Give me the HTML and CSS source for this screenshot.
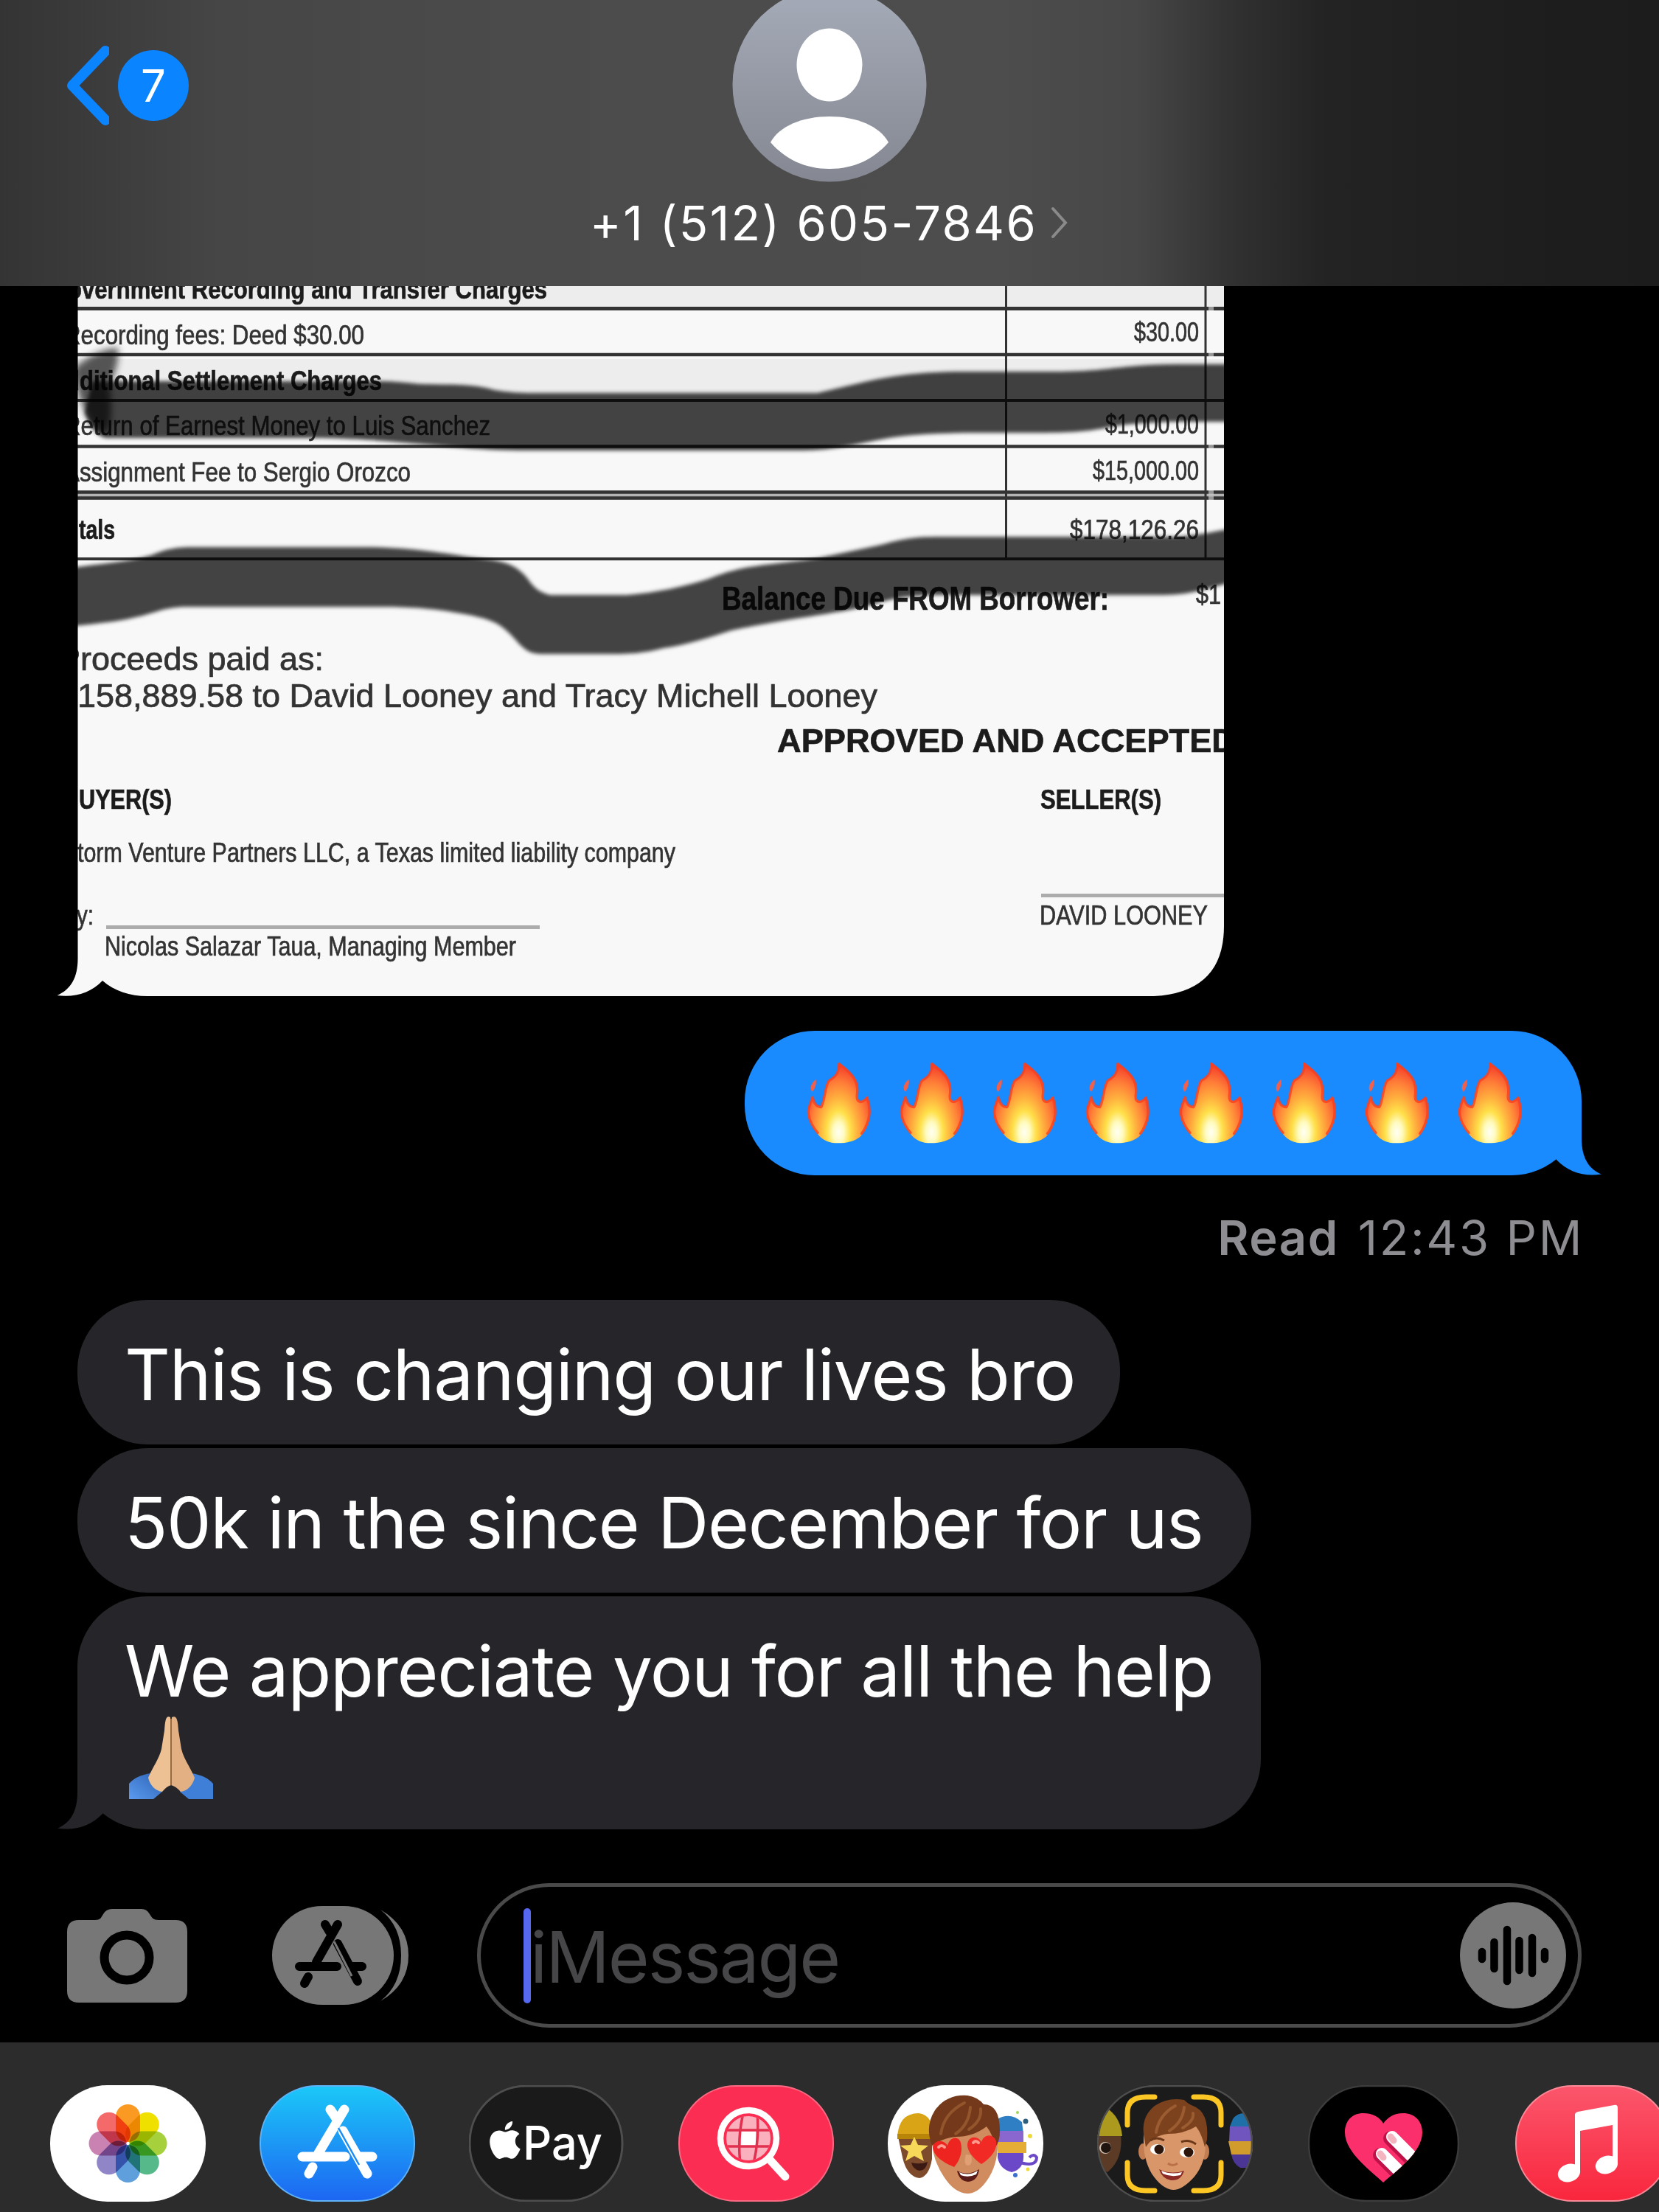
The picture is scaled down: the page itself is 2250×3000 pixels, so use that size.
FILE: index.html
```
<!DOCTYPE html>
<html lang="en">
<head>
  <meta charset="UTF-8">
  <meta name="viewport" content="width=device-width, initial-scale=1.0">
  <title>Messages</title>
  <link rel="stylesheet" href="styles.css">
</head>
<body>
<svg class="defs" width="0" height="0">
  <defs>
    <radialGradient id="fire-fill" gradientUnits="userSpaceOnUse" cx="230" cy="320" r="270" gradientTransform="translate(104 0) scale(0.55 1)">
      <stop offset="0" stop-color="#fffff4"/>
      <stop offset="0.15" stop-color="#fffbc0"/>
      <stop offset="0.32" stop-color="#ffe04a"/>
      <stop offset="0.52" stop-color="#ffb03e"/>
      <stop offset="0.74" stop-color="#ff8038"/>
      <stop offset="1" stop-color="#f4402c"/>
    </radialGradient>
    <symbol id="fire" viewBox="95 30 275 340">
      <path fill="url(#fire-fill)" d="M230 36 C285 78 318 110 309 170 C307 185 312 193 320 193 C334 191 340 184 348 174 C364 220 362 265 344 300 C336 318 326 328 318 338 C295 356 265 364 228 364 C190 364 168 352 150 332 C130 308 104 270 104 235 C106 215 118 198 125 174 C130 200 142 216 158 216 C174 190 172 135 190 108 C212 100 232 82 228 58 Z"/>
      <path fill="none" stroke="#f8401f" stroke-width="10" stroke-opacity="0.8" stroke-linejoin="round" stroke-linecap="round" d="M146 322 C126 300 108 266 108 235 C110 215 118 198 125 178 C130 202 142 218 160 218 C176 190 174 135 192 110 C212 100 234 82 232 42 C283 80 314 110 305 170 C303 188 310 197 320 197 C334 195 340 188 346 180 C360 220 358 262 340 298 C336 308 330 318 324 325"/>
      <path fill="#f0604c" d="M138 106 C142 122 136 142 124 156 C112 144 118 122 138 106Z"/>
    </symbol>
    <symbol id="tail" viewBox="0 0 80 100">
      <path d="M28 0 V50 C28 76 18 92 1 98.500 C24 102 46 96 62 79 L80 40 Z"/>
    </symbol>
  </defs>
</svg>

<div class="phone">
  <header class="header">
    <div class="back">
      <svg width="64" height="114" viewBox="0 0 64 114"><path d="M59 10 L14 57 L59 104" fill="none" stroke="#0a84ff" stroke-width="14" stroke-linecap="round" stroke-linejoin="round"/></svg>
      <span class="badge">7</span>
    </div>
    <div class="contact">
      <svg class="avatar" width="264" height="264" viewBox="0 0 264 264">
        <defs><linearGradient id="av" x1="0" y1="0" x2="0" y2="1"><stop offset="0" stop-color="#a5abb8"/><stop offset="1" stop-color="#858892"/></linearGradient></defs>
        <circle cx="132" cy="132" r="131.500" fill="url(#av)"/>
        <ellipse cx="132" cy="105" rx="44.500" ry="49.500" fill="#fff"/>
        <path d="M52 210 C64 188 95 175 132 175 C169 175 200 188 212 210 C192 233 165 246 132 246 C99 246 72 233 52 210Z" fill="#fff"/>
      </svg>
      <div class="number">
        <span class="number-text">+1 (512) 605-7846</span>
        <svg width="26" height="44" viewBox="0 0 26 44"><path d="M4 3 L21 22 L4 41" fill="none" stroke="#8a8a8a" stroke-width="4" stroke-linecap="round"/></svg>
      </div>
    </div>
  </header>

  <main class="thread">
    <svg class="attachment" width="1584" height="963" viewBox="77 388 1584 963">
      <defs>
        <clipPath id="bubble-clip"><path d="M105.500 388 V1300 C105.500 1326 96 1342 77.500 1350 C101 1353 123 1347 139 1330 C155 1344 176 1351 200 1351 H1565 Q1660 1346 1660 1256 V388 Z"/></clipPath>
        <filter id="soft" x="-5%" y="-20%" width="110%" height="140%"><feGaussianBlur stdDeviation="2.500"/></filter>
        <filter id="softer" x="-40%" y="-40%" width="180%" height="180%"><feGaussianBlur stdDeviation="5"/></filter>
      </defs>
      <g clip-path="url(#bubble-clip)">
        <rect x="77" y="388" width="1584" height="963" fill="#f8f8f8"/>
        <rect x="105" y="388" width="1556" height="31" fill="#ededed"/>
        <rect x="105" y="487" width="1556" height="56" fill="#ededed"/>

        <g class="rules">
          <path d="M105 418.500H1661" stroke-width="5"/>
          <path d="M105 481H1661" stroke-width="4.500"/>
          <path d="M105 543H1661" stroke-width="4"/>
          <path d="M105 605.500H1661" stroke-width="4.500"/>
          <path d="M105 671.500H1661" stroke-width="12" stroke="#b4b4b4"/>
          <path d="M105 667.500H1661" stroke-width="4.500"/>
          <path d="M105 675.500H1661" stroke-width="4.500"/>
          <path d="M105 758H1661" stroke-width="4"/>
          <path d="M1364.500 388V758M1635 388V758" stroke-width="3"/>
        </g>
        <path class="fade" d="M1639 418.500H1646M1639 481H1646M1639 605.500H1646M1639 667.500H1646M1639 675.500H1646"/>
        <path d="M144 1257.500H732M1412 1214.500H1661" stroke="#acacac" stroke-width="5"/>

        <g class="doc bold">
          <text x="92" y="405" textLength="650" lengthAdjust="spacingAndGlyphs">overnment Recording and Transfer Charges</text>
          <text x="89" y="529" textLength="429" lengthAdjust="spacingAndGlyphs">dditional Settlement Charges</text>
          <text x="107" y="731" textLength="49" lengthAdjust="spacingAndGlyphs">tals</text>
          <text x="107" y="1097" textLength="126" lengthAdjust="spacingAndGlyphs">UYER(S)</text>
          <text x="1411" y="1097" textLength="164" lengthAdjust="spacingAndGlyphs">SELLER(S)</text>
          <text class="large" x="979" y="827" textLength="525" lengthAdjust="spacingAndGlyphs">Balance Due FROM Borrower:</text>
          <text class="large" x="1054" y="1020" textLength="622" lengthAdjust="spacingAndGlyphs">APPROVED AND ACCEPTED</text>
        </g>
        <g class="doc">
          <text x="87" y="467" textLength="407" lengthAdjust="spacingAndGlyphs">Recording fees: Deed $30.00</text>
          <text x="87" y="590" textLength="578" lengthAdjust="spacingAndGlyphs">Return of Earnest Money to Luis Sanchez</text>
          <text x="87" y="653" textLength="470" lengthAdjust="spacingAndGlyphs">Assignment Fee to Sergio Orozco</text>
          <text x="1538" y="463" textLength="88" lengthAdjust="spacingAndGlyphs">$30.00</text>
          <text x="1499" y="588" textLength="127" lengthAdjust="spacingAndGlyphs">$1,000.00</text>
          <text x="1482" y="651" textLength="144" lengthAdjust="spacingAndGlyphs">$15,000.00</text>
          <text x="1451" y="731" textLength="175" lengthAdjust="spacingAndGlyphs">$178,126.26</text>
          <text x="1622" y="819" textLength="34" lengthAdjust="spacingAndGlyphs">$1</text>
          <text x="105" y="1169" textLength="811" lengthAdjust="spacingAndGlyphs">torm Venture Partners LLC, a Texas limited liability company</text>
          <text x="104" y="1254" textLength="23" lengthAdjust="spacingAndGlyphs">y:</text>
          <text x="142" y="1296" textLength="558" lengthAdjust="spacingAndGlyphs">Nicolas Salazar Taua, Managing Member</text>
          <text x="1410" y="1254" textLength="228" lengthAdjust="spacingAndGlyphs">DAVID LOONEY</text>
          <text class="large" x="79" y="909" textLength="360" lengthAdjust="spacingAndGlyphs">Proceeds paid as:</text>
          <text class="large" x="105" y="959" textLength="1085" lengthAdjust="spacingAndGlyphs">158,889.58 to David Looney and Tracy Michell Looney</text>
        </g>

        <!-- marker strokes -->
        <g class="marker" filter="url(#soft)">
          <path d="M125 517 L215 517 H515 C545 517 560 521 580 521 C610 522 640 520 671 529 C690 532 705 533 724 533 H1109 C1130 528 1150 523 1186 515 C1230 506 1270 504 1308 504 H1430 C1480 504 1500 500 1533 497 Q1560 494 1600 494 H1680 V572 H1590 C1540 574 1520 576 1502 580 C1470 586 1450 587 1400 587 H1310 C1260 588 1230 590 1200 595 C1160 602 1130 611 1090 611 H730 C660 612 620 606 542 600 C500 596 470 595 435 594 H145 C130 592 122 575 115 560 Z"/>
          <path d="M90 771 C130 765 170 763 205 753 C226 744 240 742 262 742 H505 C560 743 600 750 649 757 C685 761 700 766 715 784 C726 800 733 803 746 807 H850 C890 804 930 795 961 785 C980 778 995 772 1030 767 C1070 762 1090 760 1109 757 L1190 740 C1225 731 1235 728 1275 728 H1590 C1620 727 1640 722 1680 715 V787 C1630 800 1615 807 1570 807 H1290 C1230 806 1205 813 1180 821 C1150 830 1060 840 992 855 C960 865 930 875 900 879 C875 886 850 887 830 887 H735 C705 887 705 866 676 847 C660 838 640 834 600 828 C560 823 540 823 500 823 H250 C220 824 210 832 180 838 C160 843 130 846 90 850 Z"/>
        </g>
        <path class="blot" filter="url(#softer)" d="M100 500 C118 484 140 472 160 472 C162 494 154 508 148 524 C154 556 150 588 142 588 C120 580 108 550 100 500Z"/>
      </g>
    </svg>

    <div class="bubble sent">
      <svg class="fire"><use href="#fire"/></svg>
      <svg class="fire"><use href="#fire"/></svg>
      <svg class="fire"><use href="#fire"/></svg>
      <svg class="fire"><use href="#fire"/></svg>
      <svg class="fire"><use href="#fire"/></svg>
      <svg class="fire"><use href="#fire"/></svg>
      <svg class="fire"><use href="#fire"/></svg>
      <svg class="fire"><use href="#fire"/></svg>
      <svg class="tail tail-right"><use href="#tail" width="80" height="100"/></svg>
    </div>
    <div class="receipt"><b>Read</b><span>12:43 PM</span></div>

    <div class="bubble received first"><span>This is changing our lives bro</span></div>
    <div class="bubble received second"><span>50k in the since December for us</span></div>
    <div class="bubble received third">
      <span>We appreciate you for all the help</span>
      <svg class="pray" width="116" height="114" viewBox="0 0 116 114">
        <defs><linearGradient id="cuff" x1="0" y1="1" x2="1" y2="0"><stop offset="0" stop-color="#5b9bf0"/><stop offset="1" stop-color="#2c62b4"/></linearGradient></defs>
        <path d="M1 92 C8 84 18 80 30 78 L46 103 L34 113 H1Z" fill="url(#cuff)"/>
        <path d="M115 92 C108 84 98 80 86 78 L70 103 L82 113 H115Z" fill="#3f7fd8"/>
        <path d="M57 2 C51 -1 50 6 49 20 L45 45 C42 58 34 68 27 84 C30 96 38 102 46 103 C50 98 54 95 58 94Z" fill="#eec194"/>
        <path d="M59 2 C66 -1 67 6 68 20 L72 45 C75 58 83 68 90 84 C87 96 79 102 71 103 C67 98 62 95 58 94Z" fill="#e2b083"/>
        <path d="M58 4 V94" stroke="#99693f" stroke-width="2"/>
      </svg>
      <svg class="tail tail-left"><use href="#tail" width="80" height="100"/></svg>
    </div>
  </main>

  <div class="composer">
    <svg class="camera" width="163" height="128" viewBox="0 0 163 128">
      <path d="M16 15 H38 C45 15 46 12 49 7 Q53 0 61 0 H101 Q108 0 112 7 C115 12 117 15 124 15 H147 Q163 15 163 31 V111 Q163 127 147 127 H16 Q0 127 0 111 V31 Q0 15 16 15Z" fill="#777"/>
      <circle cx="81" cy="66" r="30.500" fill="none" stroke="#000" stroke-width="12"/>
    </svg>
    <svg class="apps" width="186" height="136" viewBox="0 0 186 136">
      <rect x="0" y="1" width="165" height="134" rx="68" fill="#777"/>
      <path d="M147 6 Q185 28 185 68 Q185 108 147 130 Q175 108 175 68 Q175 28 147 6Z" fill="#777"/>
      <path d="M89 26 L60 77 M72 26 L78 36 M89 52 L116 103 M37 83 H88 M109 83 H122 M49 97 L44 106" fill="none" stroke="#000" stroke-width="12" stroke-linecap="round"/>
      <path d="M84 49 L108 96" fill="none" stroke="#777" stroke-width="3"/>
    </svg>
    <div class="input">
      <i class="caret"></i>
      <span class="placeholder">iMessage</span>
      <svg class="mic" width="144" height="144" viewBox="0 0 144 144">
        <circle cx="72" cy="72" r="72" fill="#777"/>
        <path d="M30 67V77M46.500 54V90M64 37V107M80.500 52V92M98 48V96M115 67V77" stroke="#000" stroke-width="10.500" stroke-linecap="round"/>
      </svg>
    </div>
  </div>

  <nav class="dock">
    <svg class="app" viewBox="0 0 211 158">
      <rect width="211" height="158" rx="78" fill="#fff"/>
      <g class="petals">
        <rect x="89" y="26" width="33" height="51" rx="16.500" fill="#fb9a22"/>
        <rect x="89" y="26" width="33" height="51" rx="16.500" fill="#efe000" transform="rotate(45 105.500 79)"/>
        <rect x="89" y="26" width="33" height="51" rx="16.500" fill="#a6d03c" transform="rotate(90 105.500 79)"/>
        <rect x="89" y="26" width="33" height="51" rx="16.500" fill="#55b98a" transform="rotate(135 105.500 79)"/>
        <rect x="89" y="26" width="33" height="51" rx="16.500" fill="#5f9fdc" transform="rotate(180 105.500 79)"/>
        <rect x="89" y="26" width="33" height="51" rx="16.500" fill="#9085c6" transform="rotate(225 105.500 79)"/>
        <rect x="89" y="26" width="33" height="51" rx="16.500" fill="#c982b2" transform="rotate(270 105.500 79)"/>
        <rect x="89" y="26" width="33" height="51" rx="16.500" fill="#f4696a" transform="rotate(315 105.500 79)"/>
      </g>
    </svg>
    <svg class="app" viewBox="0 0 211 158">
      <defs><linearGradient id="store" x1="0" y1="0" x2="0" y2="1"><stop offset="0" stop-color="#1bc8f8"/><stop offset="1" stop-color="#1d66f2"/></linearGradient></defs>
      <rect x="1" y="1" width="209" height="156" rx="77" fill="url(#store)" stroke="#5fb2f6" stroke-width="2"/>
      <path d="M115 33 L80 92 M96 33 L104 45 M113 62 L146 120 M58 97 H116 M137 97 H153 M72 111 L67 120" fill="none" stroke="#fff" stroke-width="13" stroke-linecap="round"/>
      <path d="M107 58 L135 108" stroke="#1b8cf5" stroke-width="2.500"/>
    </svg>
    <svg class="app" viewBox="0 0 211 158">
      <rect x="1" y="1" width="207" height="156" rx="77" fill="#1a1a1a" stroke="#4e4e4e" stroke-width="3"/>
      <path transform="translate(23.500 49) scale(2.120)" fill="#fff" d="M12.152 6.896c-.948 0-2.415-1.078-3.960-1.040-2.040.027-3.910 1.183-4.961 3.014-2.117 3.675-.546 9.103 1.519 12.090 1.013 1.454 2.208 3.090 3.792 3.039 1.520-.065 2.090-.987 3.935-.987 1.831 0 2.350.987 3.960.948 1.637-.026 2.676-1.480 3.676-2.948 1.156-1.688 1.636-3.325 1.662-3.415-.039-.013-3.182-1.221-3.220-4.857-.026-3.040 2.480-4.494 2.597-4.559-1.429-2.090-3.623-2.324-4.390-2.376-2-.156-3.675 1.090-4.610 1.090zM15.530 3.830c.843-1.012 1.400-2.427 1.245-3.830-1.207.052-2.662.805-3.532 1.818-.780.896-1.454 2.338-1.273 3.714 1.338.104 2.715-.688 3.559-1.701"/>
      <text class="pay" x="73" y="101" textLength="108" lengthAdjust="spacingAndGlyphs">Pay</text>
    </svg>
    <svg class="app" viewBox="0 0 211 158">
      <defs><clipPath id="globe"><circle cx="95" cy="72" r="30"/></clipPath></defs>
      <rect x="1" y="1" width="209" height="156" rx="77" fill="#fc2d52" stroke="#fb6a83" stroke-width="2"/>
      <g clip-path="url(#globe)">
        <rect x="60" y="40" width="70" height="64" fill="#fbb0be"/>
        <rect x="85" y="61" width="20" height="22" fill="#fff"/>
        <path d="M60 61 H130 M60 83 H130 M88 38 Q80 72 84 106 M107 38 Q110 72 102 106" fill="none" stroke="#e2304f" stroke-width="3.500"/>
      </g>
      <circle cx="95" cy="72" r="38" fill="none" stroke="#fff" stroke-width="8.500"/>
      <path d="M124 101 L145 124" stroke="#fff" stroke-width="11" stroke-linecap="round"/>
    </svg>
    <svg class="app" viewBox="0 0 211 158">
      <rect width="211" height="158" rx="78" fill="#fff"/>
      <path d="M14 70 H60 V100 Q56 124 43 126 Q26 124 20 98Z" fill="#7d4a2c"/>
      <path d="M13 72 Q14 38 42 38 Q62 40 62 72 Z" fill="#d9a516"/>
      <path d="M13 66 H62 V73 H13Z" fill="#b98508"/>
      <path d="M36 70 L41 81 L55 82 L45 90 L49 103 L36 96 L24 103 L28 90 L17 82 L31 81Z" fill="#f7d95a"/>
      <path d="M32 105 Q44 108 54 104 Q52 116 43 116 Q34 114 32 105Z" fill="#3c1a14"/>
      <path d="M149 46 Q166 36 182 50 L184 66 H149Z" fill="#2f7fc4"/>
      <path d="M149 62 H184 V78 H149Z" fill="#8a66cf"/>
      <path d="M149 77 H188 V92 H149Z" fill="#e5ad35"/>
      <path d="M149 92 H184 Q186 114 168 118 Q152 114 149 98Z" fill="#6a48c8"/>
      <path d="M176 104 Q202 112 202 98 Q198 92 192 98" fill="none" stroke="#6a48c8" stroke-width="4"/>
      <circle cx="187" cy="49" r="3.500" fill="#2a5f7e"/><circle cx="193" cy="69" r="3" fill="#f0da3a"/><circle cx="173" cy="122" r="3" fill="#3a6fd0"/><circle cx="190" cy="114" r="2.500" fill="#f0da3a"/><circle cx="176" cy="37" r="2" fill="#9fd65b"/>
      <path d="M60 74 Q62 40 105 40 Q150 42 149 76 Q150 108 134 130 Q122 147 108 147 Q90 146 76 124 Q60 100 60 74Z" fill="#d08c5e"/>
      <path d="M60 82 Q50 56 64 34 Q80 12 108 14 Q122 16 130 26 Q152 26 152 62 Q152 76 146 84 Q142 66 134 56 Q116 70 92 70 Q74 72 60 82Z" fill="#74391a"/>
      <path d="M72 66 Q76 38 104 24 M92 66 Q110 54 112 30 M110 60 Q128 48 126 32" fill="none" stroke="#93552b" stroke-width="4" stroke-linecap="round"/>
      <path d="M94 116 Q108 124 124 114 Q122 130 109 131 Q97 130 94 116Z" fill="#5a1c18"/>
      <path d="M97 118 Q109 124 122 116 L120 121 Q109 126 99 122Z" fill="#fff"/>
      <path d="M106 94 Q102 108 109 109 Q116 108 113 95" fill="#e0a074"/>
      <path d="M90 111 C72 104 58 92 62 81 C67 72 78 76 81 82 C84 70 96 68 99 78 C102 90 98 102 90 111Z" fill="#ee2420"/>
      <path d="M127 107 C114 98 105 86 109 76 C114 67 124 71 127 77 C131 65 144 66 147 76 C149 89 138 100 127 107Z" fill="#f22a26"/>
      <path d="M69 84 Q73 80 77 84 M116 78 Q119 74 123 78" fill="none" stroke="#ff9a8e" stroke-width="4" stroke-linecap="round"/>
    </svg>
    <svg class="app" viewBox="0 0 211 158">
      <defs><clipPath id="pill"><rect width="211" height="158" rx="78"/></clipPath></defs>
      <rect width="211" height="158" rx="78" fill="#1b1b1b"/>
      <g clip-path="url(#pill)">
        <path d="M0 66 H32 Q36 100 14 118 L0 112Z" fill="#5b3a26"/>
        <path d="M0 34 H17 Q32 46 34 69 H0Z" fill="#ac9a1e"/>
        <circle cx="11" cy="85" r="8" fill="#cfc0b4"/><circle cx="12" cy="85" r="7" fill="#20140f"/>
        <path d="M184 46 Q192 34 211 40 V56 H180Z" fill="#1f6fa8"/>
        <path d="M180 56 H211 V76 H179Z" fill="#6f55bd"/>
        <path d="M178 76 H211 V94 H182Z" fill="#d19c2c"/>
        <path d="M182 94 H211 V112 H194Q184 106 182 94Z" fill="#4c3695"/>
      </g>
      <ellipse cx="62" cy="90" rx="6" ry="11" fill="#c27e52"/><ellipse cx="146" cy="90" rx="6" ry="11" fill="#c27e52"/>
      <path d="M63 70 Q66 40 105 40 Q146 42 147 76 Q148 104 132 124 Q116 142 103 142 Q88 141 74 120 Q62 100 63 70Z" fill="#d99668"/>
      <path d="M64 72 Q58 44 78 28 Q96 16 118 20 Q124 26 130 28 Q152 36 149 74 L146 84 Q142 66 134 56 Q118 66 96 66 Q76 68 66 84Z" fill="#7c421e"/>
      <path d="M80 64 Q84 40 106 28 M98 62 Q116 50 118 30 M116 58 Q132 48 130 38" fill="none" stroke="#9a5c30" stroke-width="4" stroke-linecap="round"/>
      <ellipse cx="82" cy="87" rx="10" ry="7" fill="#fff"/><ellipse cx="122" cy="91" rx="10" ry="7" fill="#fff"/>
      <circle cx="84" cy="87" r="6.500" fill="#2c160c"/><circle cx="124" cy="91" r="6.500" fill="#2c160c"/>
      <path d="M72 75 Q80 69 91 75 M114 77 Q124 73 134 80" fill="none" stroke="#6a3818" stroke-width="3"/>
      <path d="M96 106 Q102 111 109 106" fill="none" stroke="#bb7148" stroke-width="3"/>
      <path d="M84 114 Q100 122 118 116 Q114 130 100 129 Q88 127 84 114Z" fill="#8a2c25"/>
      <path d="M87 116 Q100 122 115 118 L113 122 Q100 125 89 120Z" fill="#fff"/>
      <path d="M41 54 V37 Q41 16 66 16 H78 M131 16 H144 Q168 16 168 37 V54 M41 105 V122 Q41 143 66 143 H78 M131 143 H144 Q168 143 168 122 V105" fill="none" stroke="#fcc724" stroke-width="7" stroke-linecap="round"/>
      <rect x="1" y="1" width="209" height="156" rx="77" fill="none" stroke="#4e4e4e" stroke-width="2.500"/>
    </svg>
    <svg class="app narrow" viewBox="0 0 205 158">
      <defs><clipPath id="heart"><path d="M102 132 C88 118 50 92 50 64 C50 48 60 38 75 38 C88 38 98 44 102 52 C108 44 116 38 129 38 C144 38 155 48 155 64 C155 92 117 118 102 132Z"/></clipPath></defs>
      <rect x="1" y="1" width="203" height="156" rx="77" fill="#000" stroke="#3c3c3c" stroke-width="2.500"/>
      <g clip-path="url(#heart)">
        <rect x="48" y="36" width="110" height="98" fill="#fc2f6d"/>
        <path d="M112 72 L154 114 M98 95 L140 137" stroke="#c01248" stroke-width="20" stroke-linecap="round"/>
        <path d="M114 70 L156 112 M100 93 L142 135" stroke="#fff" stroke-width="16" stroke-linecap="round"/>
        <path d="M112 70 L116 75 M98 93 L102 98" stroke="#f3b3bf" stroke-width="9" stroke-linecap="round"/>
      </g>
    </svg>
    <svg class="app" viewBox="0 0 211 158">
      <defs><linearGradient id="music" x1="0" y1="0" x2="0" y2="1"><stop offset="0" stop-color="#fb566c"/><stop offset="1" stop-color="#f9263d"/></linearGradient></defs>
      <rect x="1" y="1" width="209" height="156" rx="77" fill="url(#music)" stroke="#fb8a98" stroke-width="2"/>
      <path d="M81 40 Q81 37 85 36 L134 27 Q139 26 139 31 V106 H132 V54 L88 62 V118 H81Z" fill="#fff"/>
      <ellipse cx="73" cy="119" rx="15.500" ry="12" transform="rotate(-20 73 119)" fill="#fff"/>
      <ellipse cx="124" cy="108" rx="15.500" ry="12" transform="rotate(-20 124 108)" fill="#fff"/>
    </svg>
  </nav>
</div>
</body>
</html>
```
FILE: styles.css
```
body {
  margin: 0;
  background-color: #000;
  font-family: Inter, "Liberation Sans", sans-serif;
  color: #fff;
}

svg {
  display: block;
  flex-shrink: 0;
}

.defs {
  position: absolute;
}

.phone {
  width: 2250px;
  height: 3000px;
  overflow: hidden;
  background-color: #000;
  display: flex;
  flex-direction: column;
}

/* header */
.header {
  height: 388px;
  box-sizing: border-box;
  background: linear-gradient(90deg, #343434 0, #3b3b3b 120px, #464646 300px, #4b4b4b 700px, #4d4d4d 1350px, #474747 1540px, #303030 1680px, #232323 1800px, #1e1e1e 2050px, #1c1c1c 2250px);
  display: grid;
  grid-template-columns: 1fr 700px 1fr;
}

.back {
  display: flex;
  align-items: center;
  height: 232px;
  padding-left: 84px;
  gap: 12px;
}

.badge {
  width: 96px;
  height: 96px;
  border-radius: 50%;
  background-color: #0a84ff;
  font-size: 60px;
  line-height: 96px;
  text-align: center;
}

.contact {
  display: flex;
  flex-direction: column;
  align-items: center;
}

.avatar {
  margin-top: -17px;
}

.number {
  display: flex;
  align-items: center;
  gap: 17px;
  margin-top: 15px;
  height: 80px;
  font-size: 65px;
  white-space: nowrap;
}

.number-text {
  letter-spacing: 2.4px;
}

/* messages */
.thread {
  height: 2164px;
  padding: 0 105px;
  display: flex;
  flex-direction: column;
  align-items: flex-start;
}

.attachment {
  margin-left: -28px;
}

.doc {
  font-family: "Liberation Sans", sans-serif;
  font-size: 37px;
  fill: #333;
  stroke: #333;
  stroke-width: 0.7px;
}

.doc.bold {
  font-weight: bold;
  fill: #1c1c1c;
  stroke: #1c1c1c;
}

.doc .large {
  font-size: 44px;
}

.rules {
  fill: none;
  stroke: #333;
}

.fade {
  stroke: #f8f8f8;
  stroke-width: 6px;
  opacity: 0.5;
}

.marker {
  fill: #444;
  mix-blend-mode: multiply;
}

.blot {
  fill: #222;
  opacity: 0.75;
  mix-blend-mode: multiply;
}

.bubble {
  position: relative;
  box-sizing: border-box;
  height: 196px;
  border-radius: 95px;
  white-space: nowrap;
}

.sent {
  align-self: flex-end;
  margin-top: 47px;
  width: 1135px;
  padding: 40px 78px 0 82px;
  display: flex;
  justify-content: space-between;
  background-color: #1a8aff;
}

.fire {
  width: 92px;
  height: 115px;
}

.tail {
  position: absolute;
  bottom: 0;
  width: 80px;
  height: 100px;
}

.tail-left {
  left: -28px;
  fill: #262529;
}

.tail-right {
  right: -28px;
  transform: scaleX(-1);
  fill: #1a8aff;
}

.receipt {
  align-self: flex-end;
  display: flex;
  gap: 26px;
  margin-top: 45px;
  height: 80px;
  margin-right: -3px;
  line-height: 80px;
  font-size: 65px;
  letter-spacing: 2.6px;
  color: #8d8d92;
}

.receipt b {
  font-weight: 600;
  letter-spacing: 1.5px;
}

.received {
  background-color: #262529;
  padding-left: 64px;
  padding-top: 40px;
  font-size: 96px;
  line-height: 122px;
  letter-spacing: -1.3px;
}

.first {
  width: 1414px;
  margin-top: 44px;
}

.second {
  width: 1592px;
  margin-top: 5px;
}

.third {
  width: 1605px;
  height: 316px;
  margin-top: 5px;
}

.pray {
  margin-left: 5px;
}

/* composer */
.composer {
  height: 218px;
  box-sizing: border-box;
  padding: 2px 105px 0 91px;
  display: flex;
  align-items: flex-start;
}

.camera {
  margin-top: 35px;
}

.apps {
  margin: 30px 0 0 115px;
}

.input {
  flex: 1;
  margin-left: 92px;
  height: 196px;
  box-sizing: border-box;
  border: 5px solid #4a4a4a;
  border-radius: 98px;
  display: flex;
  align-items: center;
  padding: 0 16px 0 58px;
}

.caret {
  width: 10px;
  height: 129px;
  border-radius: 5px;
  background-color: #5667f0;
}

.placeholder {
  flex: 1;
  margin-left: -1px;
  font-size: 96px;
  line-height: 120px;
  padding-top: 3px;
  letter-spacing: -2.1px;
  color: #464648;
}

/* app strip */
.dock {
  height: 230px;
  box-sizing: border-box;
  padding: 58px 0 0 68px;
  display: flex;
  gap: 73px;
  background-color: #2c2c2c;
}

.app {
  width: 211px;
  height: 158px;
}

.narrow {
  width: 205px;
  margin-left: 2px;
  margin-right: 3px;
}

.petals rect {
  mix-blend-mode: multiply;
}

.petals {
  isolation: isolate;
}

.pay {
  font-size: 63px;
  font-weight: 500;
  fill: #fff;
}
```
